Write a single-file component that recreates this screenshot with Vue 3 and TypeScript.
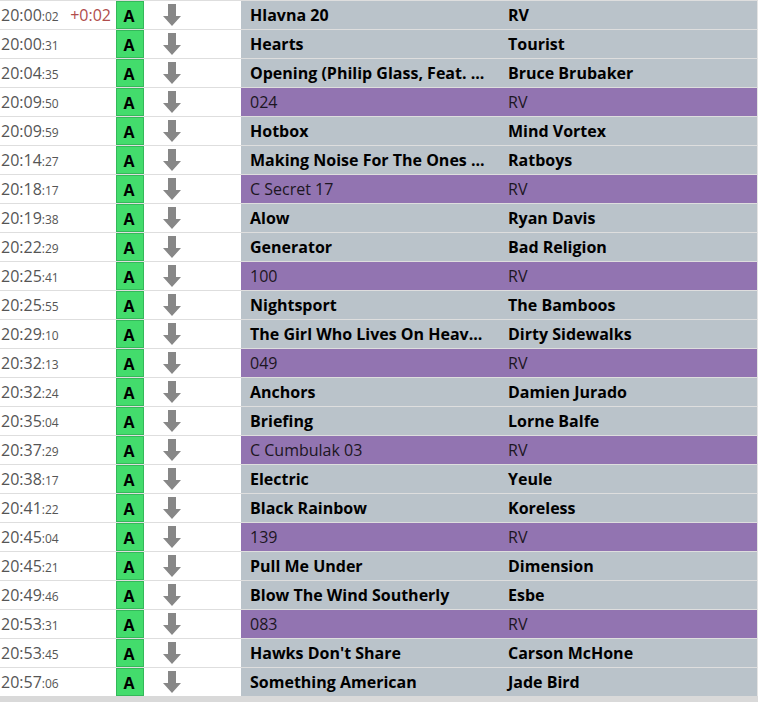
<script setup lang="ts">
type Kind = 'song' | 'jingle'

interface Entry {
  time: string
  seconds: string
  offset?: string
  title: string
  artist: string
  kind: Kind
}

const song = (time: string, seconds: string, title: string, artist: string, offset?: string): Entry =>
  ({ time, seconds, title, artist, offset, kind: 'song' })
const jingle = (time: string, seconds: string, title: string): Entry =>
  ({ time, seconds, title, artist: 'RV', kind: 'jingle' })

const entries: Entry[] = [
  song('20:00', '02', 'Hlavna 20', 'RV', '+0:02'),
  song('20:00', '31', 'Hearts', 'Tourist'),
  song('20:04', '35', 'Opening (Philip Glass, Feat. ...', 'Bruce Brubaker'),
  jingle('20:09', '50', '024'),
  song('20:09', '59', 'Hotbox', 'Mind Vortex'),
  song('20:14', '27', 'Making Noise For The Ones ...', 'Ratboys'),
  jingle('20:18', '17', 'C Secret 17'),
  song('20:19', '38', 'Alow', 'Ryan Davis'),
  song('20:22', '29', 'Generator', 'Bad Religion'),
  jingle('20:25', '41', '100'),
  song('20:25', '55', 'Nightsport', 'The Bamboos'),
  song('20:29', '10', 'The Girl Who Lives On Heav...', 'Dirty Sidewalks'),
  jingle('20:32', '13', '049'),
  song('20:32', '24', 'Anchors', 'Damien Jurado'),
  song('20:35', '04', 'Briefing', 'Lorne Balfe'),
  jingle('20:37', '29', 'C Cumbulak 03'),
  song('20:38', '17', 'Electric', 'Yeule'),
  song('20:41', '22', 'Black Rainbow', 'Koreless'),
  jingle('20:45', '04', '139'),
  song('20:45', '21', 'Pull Me Under', 'Dimension'),
  song('20:49', '46', 'Blow The Wind Southerly', 'Esbe'),
  jingle('20:53', '31', '083'),
  song('20:53', '45', "Hawks Don't Share", 'Carson McHone'),
  song('20:57', '06', 'Something American', 'Jade Bird'),
]
</script>

<template>
  <main class="playlist">
    <table class="log">
      <colgroup>
        <col class="col-time" />
        <col class="col-mode" />
        <col class="col-arrow" />
        <col class="col-title" />
        <col class="col-artist" />
      </colgroup>
      <tbody>
        <tr v-for="(entry, i) in entries" :key="i" :class="entry.kind">
          <td class="time">
            <div class="clock">
              <span>{{ entry.time }}<small>:{{ entry.seconds }}</small></span>
              <span v-if="entry.offset" class="offset">{{ entry.offset }}</span>
            </div>
          </td>
          <td class="mode"><span class="badge">A</span></td>
          <td class="arrow">
            <svg width="18" height="22" viewBox="0 0 18 22" aria-hidden="true">
              <path d="M5 0H13V12H18L9 22L0 12H5Z" fill="#878787" />
            </svg>
          </td>
          <td class="name">{{ entry.title }}</td>
          <td class="name">{{ entry.artist }}</td>
        </tr>
      </tbody>
    </table>
  </main>
</template>

<style>
body {
  margin: 0;
  background: #d9d9d9;
}
</style>

<style scoped>
.playlist {
  padding-bottom: 6px;
  font: 16px/28px "Open Sans", "Noto Sans", sans-serif;
  color: #000;
}
.log {
  width: 100%;
  table-layout: fixed;
  border-collapse: separate;
  border-spacing: 0;
  background: #fff;
}
.col-time { width: 116px; }
.col-mode { width: 28px; }
.col-arrow { width: 97px; }
.col-title { width: 258px; }
td {
  box-sizing: border-box;
  height: 29px;
  padding: 0;
  border-top: 1px solid #dedede;
  white-space: nowrap;
  overflow: hidden;
  vertical-align: top;
}
.clock {
  display: flex;
  justify-content: space-between;
  padding: 0 5px 0 1px;
  color: #555;
}
small {
  font-size: 12px;
  line-height: 12px;
}
.offset {
  color: #b04c4c;
}
.badge {
  display: block;
  box-sizing: border-box;
  height: 28px;
  border: 1px solid #34b85a;
  background: #43dc6c;
  font-weight: 700;
  line-height: 28px;
  text-align: center;
  padding-right: 2px;
}
.arrow svg {
  display: block;
  margin: 3px 0 0 19px;
}
.name {
  padding-left: 9px;
  font-weight: 700;
  background: #bac3ca;
}
.name:last-child {
  border-right: 1px solid #e4e4e4;
}
.jingle .name {
  font-weight: 400;
  color: #1c1622;
  background: #9274b1;
}
</style>
